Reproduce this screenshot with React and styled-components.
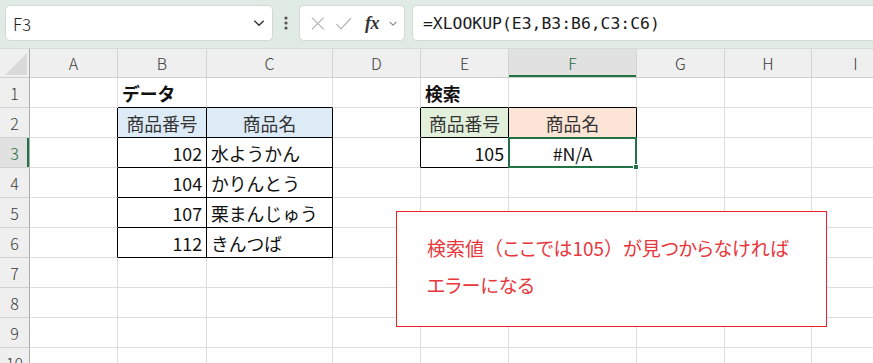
import React from "react";
import styled, { createGlobalStyle } from "styled-components";

const GlobalStyle = createGlobalStyle`
  html, body {
    margin: 0;
    padding: 0;
    background: #ffffff;
    overflow: hidden;
  }
  * { box-sizing: border-box; }
`;

const Page = styled.div`
  width: 873px;
  height: 363px;
  overflow: hidden;
  font-family: "Noto Sans CJK JP", "Noto Sans", sans-serif;
  background: #ffffff;
`;

const Toolbar = styled.div`
  height: 49px;
  background: #e1ebe5;
  display: flex;
  align-items: flex-start;
  padding: 5px 0 0 5px;
  border-bottom: 1px solid #d3dcd6;
`;

const Box = styled.div`
  height: 36px;
  background: #ffffff;
  border: 1px solid #d3d9d5;
  border-radius: 5px;
  display: flex;
  align-items: center;
`;

const NameBox = styled(Box)`
  width: 268px;
  padding: 0 6px 0 7px;
  justify-content: space-between;
  font-size: 17px;
  font-weight: 300;
  color: #222;
`;

const Dots = styled.div`
  width: 26px;
  height: 36px;
  display: flex;
  align-items: center;
  justify-content: center;
`;

const FuncBox = styled(Box)`
  width: 106px;
  padding: 0 6px 0 10px;
  gap: 9px;
`;

const Fx = styled.span`
  font-family: "Liberation Serif", "DejaVu Serif", serif;
  font-style: italic;
  font-weight: 700;
  font-size: 18px;
  color: #333;
  margin-left: 4px;
  letter-spacing: -0.5px;
`;

const FormulaBox = styled(Box)`
  flex: 1;
  margin-left: 7px;
  border-right: none;
  border-radius: 5px 0 0 5px;
  padding-left: 10px;
  font-family: "DejaVu Sans Mono", "Liberation Mono", monospace;
  font-size: 16.4px;
  color: #1a1a1a;
`;

const Sheet = styled.div`
  position: relative;
  display: grid;
  grid-template-columns: 30px 88px 89px 126px 88px 88px 128px 88px 87px 88px;
  grid-template-rows: 29px repeat(10, 30px);
`;

const HeadCell = styled.div`
  background: ${(p) => (p.$active ? "#e1e1e1" : "#efefef")};
  border-right: 1px solid ${(p) => (p.$row ? "#ababab" : "#d4d4d4")};
  border-bottom: 1px solid #cfcfcf;
  display: flex;
  align-items: center;
  justify-content: center;
  font-size: 16px;
  font-weight: 300;
  color: ${(p) => (p.$active ? "#1e6b41" : "#3b3b3b")};
  box-shadow: ${(p) =>
    p.$active ? (p.$row ? "inset -2px 0 0 #217346" : "inset 0 -2px 0 #217346") : "none"};
`;

const Corner = styled(HeadCell)`
  border-right: 1px solid #ababab;
  padding: 3px 2px 2px 4px;
  align-items: flex-end;
  justify-content: flex-end;
`;

const Cell = styled.div`
  position: relative;
  background: ${(p) => p.$bg || "#ffffff"};
  border-right: 1px solid ${(p) => (p.$rb ? "#000" : "#dcdcdc")};
  border-bottom: 1px solid ${(p) => (p.$bb ? "#000" : "#dcdcdc")};
  display: flex;
  align-items: center;
  justify-content: ${(p) =>
    p.$align === "right" ? "flex-end" : p.$align === "center" ? "center" : "flex-start"};
  padding: 0 4px 0 4px;
  font-size: 17.8px;
  font-weight: ${(p) => (p.$bold ? 700 : 400)};
  color: ${(p) => (p.$head ? "#333" : "#111")};
  white-space: nowrap;
  overflow: visible;
  z-index: ${(p) => (p.$sel ? 2 : 1)};
`;

const Selection = styled.div`
  position: absolute;
  left: -1px;
  top: -1px;
  right: -1px;
  bottom: -1px;
  border: 2px solid #217346;
  pointer-events: none;
`;

const Handle = styled.div`
  position: absolute;
  right: -4px;
  bottom: -4px;
  width: 6px;
  height: 6px;
  background: #217346;
  border: 1px solid #ffffff;
`;

const Note = styled.div`
  position: absolute;
  left: 396px;
  top: 162px;
  width: 431px;
  height: 116px;
  background: #ffffff;
  border: 1px solid #e8212b;
  padding: 17px 0 0 30px;
  z-index: 5;
  color: #e8383d;
  font-size: 19px;
  line-height: 37px;
  font-feature-settings: "palt";
`;

const Wide = styled.span`
  font-feature-settings: normal;
`;

const columns = ["A", "B", "C", "D", "E", "F", "G", "H", "I"];
const rowCount = 10;

const cells = {
  B1: { text: "データ", bold: true },
  E1: { text: "検索", bold: true },
  B2: { text: "商品番号", align: "center", bg: "#ddebf7", head: true },
  C2: { text: "商品名", align: "center", bg: "#ddebf7", head: true },
  B3: { text: "102", align: "right" },
  C3: { text: "水ようかん" },
  B4: { text: "104", align: "right" },
  C4: { text: "かりんとう" },
  B5: { text: "107", align: "right" },
  C5: { text: "栗まんじゅう" },
  B6: { text: "112", align: "right" },
  C6: { text: "きんつば" },
  E2: { text: "商品番号", align: "center", bg: "#e2efda", head: true },
  F2: { text: "商品名", align: "center", bg: "#fce4d6", head: true },
  E3: { text: "105", align: "right" },
  F3: { text: "#N/A", align: "center" },
};

const tables = [
  { c0: 1, c1: 2, r0: 2, r1: 6 },
  { c0: 4, c1: 5, r0: 2, r1: 3 },
];

const inTable = (r, c) =>
  tables.some((t) => c >= t.c0 && c <= t.c1 && r >= t.r0 && r <= t.r1);

const Chevron = ({ size = 12, color = "#444" }) => (
  <svg width={size} height={size} viewBox="0 0 12 12">
    <path d="M2 4 L6 8 L10 4" fill="none" stroke={color} strokeWidth="1.2" />
  </svg>
);

const App = () => {
  const activeCol = "F";
  const activeRow = 3;

  const rows = [];
  for (let r = 1; r <= rowCount; r++) {
    rows.push(
      <HeadCell key={`h${r}`} $row $active={r === activeRow}>
        {r}
      </HeadCell>
    );
    columns.forEach((col, c) => {
      const id = `${col}${r}`;
      const d = cells[id] || {};
      const sel = col === activeCol && r === activeRow;
      rows.push(
        <Cell
          key={id}
          $align={d.align}
          $bg={d.bg}
          $bold={d.bold}
          $head={d.head}
          $rb={inTable(r, c) || inTable(r, c + 1)}
          $bb={inTable(r, c) || inTable(r + 1, c)}
          $sel={sel}
        >
          {d.text}
          {sel && (
            <Selection>
              <Handle />
            </Selection>
          )}
        </Cell>
      );
    });
  }

  return (
    <Page>
      <GlobalStyle />
      <Toolbar>
        <NameBox>
          <span>F3</span>
          <Chevron size={14} color="#333" />
        </NameBox>
        <Dots>
          <svg width="4" height="16" viewBox="0 0 4 16">
            <circle cx="2" cy="3" r="1.6" fill="#555" />
            <circle cx="2" cy="8" r="1.6" fill="#555" />
            <circle cx="2" cy="13" r="1.6" fill="#555" />
          </svg>
        </Dots>
        <FuncBox>
          <svg width="17" height="17" viewBox="0 0 17 17">
            <path d="M2 2 L15 15 M15 2 L2 15" stroke="#b4b4b4" strokeWidth="1.3" />
          </svg>
          <svg width="19" height="17" viewBox="0 0 19 17">
            <path d="M1.5 9 L6.5 14.5 L17.5 2.5" fill="none" stroke="#b4b4b4" strokeWidth="1.3" />
          </svg>
          <Fx>fx</Fx>
          <Chevron size={11} color="#888" />
        </FuncBox>
        <FormulaBox>=XLOOKUP(E3,B3:B6,C3:C6)</FormulaBox>
      </Toolbar>
      <Sheet>
        <Corner>
          <svg width="22" height="22" viewBox="0 0 22 22">
            <path d="M22 0 L22 22 L0 22 Z" fill="#dadada" />
          </svg>
        </Corner>
        {columns.map((col) => (
          <HeadCell key={col} $active={col === activeCol}>
            {col}
          </HeadCell>
        ))}
        {rows}
        <Note>
          検索値<Wide>（</Wide>ここでは105<Wide>）</Wide>が見つからなければ
          <br />
          エラーになる
        </Note>
      </Sheet>
    </Page>
  );
};

export default App;
